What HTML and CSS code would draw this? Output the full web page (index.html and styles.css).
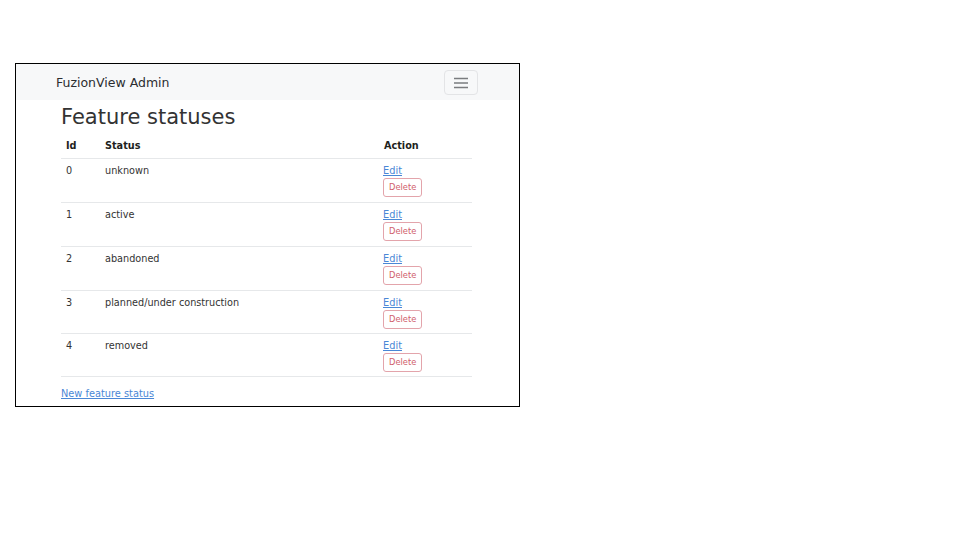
FILE: index.html
```html
<!DOCTYPE html>
<html lang="en">
<head>
<meta charset="utf-8">
<title>FuzionView Admin</title>
<link rel="stylesheet" href="styles.css">
</head>
<body>
<div class="frame">
  <nav class="navbar">
    <span class="brand">FuzionView Admin</span>
    <button class="toggler" type="button" aria-label="Toggle navigation">
      <svg width="16" height="12" viewBox="0 0 16 12"><path d="M1 1.5h14M1 6h14M1 10.5h14" stroke="#7a7c7f" stroke-width="1.3" fill="none"/></svg>
    </button>
  </nav>
  <main class="content">
    <h1 class="title">Feature statuses</h1>
    <table class="table">
      <thead>
        <tr><th class="c-id">Id</th><th class="c-status">Status</th><th class="c-action">Action</th></tr>
      </thead>
      <tbody>
        <tr><td>0</td><td>unknown</td><td><a href="#" class="link">Edit</a><button class="btn-del">Delete</button></td></tr>
        <tr><td>1</td><td>active</td><td><a href="#" class="link">Edit</a><button class="btn-del">Delete</button></td></tr>
        <tr><td>2</td><td>abandoned</td><td><a href="#" class="link">Edit</a><button class="btn-del">Delete</button></td></tr>
        <tr><td>3</td><td>planned/under construction</td><td><a href="#" class="link">Edit</a><button class="btn-del">Delete</button></td></tr>
        <tr><td>4</td><td>removed</td><td><a href="#" class="link">Edit</a><button class="btn-del">Delete</button></td></tr>
      </tbody>
    </table>
    <a href="#" class="link">New feature status</a>
  </main>
</div>
</body>
</html>
```
FILE: styles.css
```css
html, body {
  margin: 0;
  background: #ffffff;
}
body {
  padding: 63px 0 0 15px;
  font-family: "DejaVu Sans", sans-serif;
  color: #2b2d30;
}
.frame {
  box-sizing: border-box;
  width: 505px;
  height: 344px;
  border: 1px solid #000;
  background: #fff;
  overflow: hidden;
}
.navbar {
  height: 36px;
  background: #f7f8f9;
  display: flex;
  align-items: center;
  justify-content: space-between;
  padding: 0 41px 0 40px;
}
.brand {
  font-size: 12.5px;
  color: #2b2d30;
}
.toggler {
  width: 34px;
  height: 25px;
  padding: 0;
  border: 1px solid #e3e4e6;
  border-radius: 4px;
  background: transparent;
  display: flex;
  align-items: center;
  justify-content: center;
  margin-top: 1px;
}
.content {
  padding: 0 46px 0 45px;
}
.title {
  margin: 4px 0 3px;
  font-size: 21px;
  font-weight: 400;
  line-height: 26px;
  color: #333;
}
.table {
  width: 411px;
  border-collapse: collapse;
  font-size: 9.7px;
  margin-bottom: 10px;
}
.table th, .table td {
  text-align: left;
  vertical-align: top;
  padding: 5px 5px 5px;
  line-height: 14px;
  border-bottom: 1px solid #e6e8ea;
}
.table tbody tr:nth-child(n+4) td {
  padding-bottom: 4px;
}
.table th {
  font-weight: 700;
  color: #1e1f21;
  padding-top: 6px;
  padding-bottom: 5px;
}
.c-id { width: 29px; }
.c-status { width: 269px; }
.table td:last-child { padding-left: 4px; }
.table th.c-action { padding-left: 5px; }
.table td { color: #333; }
.link {
  color: #4a87d6;
  text-decoration: underline;
  font-size: 9.8px;
  display: block;
  line-height: 14px;
  width: max-content;
}
.btn-del {
  display: block;
  margin-top: 0;
  font-family: "DejaVu Sans", sans-serif;
  font-size: 8.3px;
  color: #d0606c;
  background: #fff;
  border: 1px solid #e3a4ab;
  border-radius: 3px;
  height: 19px;
  padding: 0 5px;
  line-height: 17px;
}
```
